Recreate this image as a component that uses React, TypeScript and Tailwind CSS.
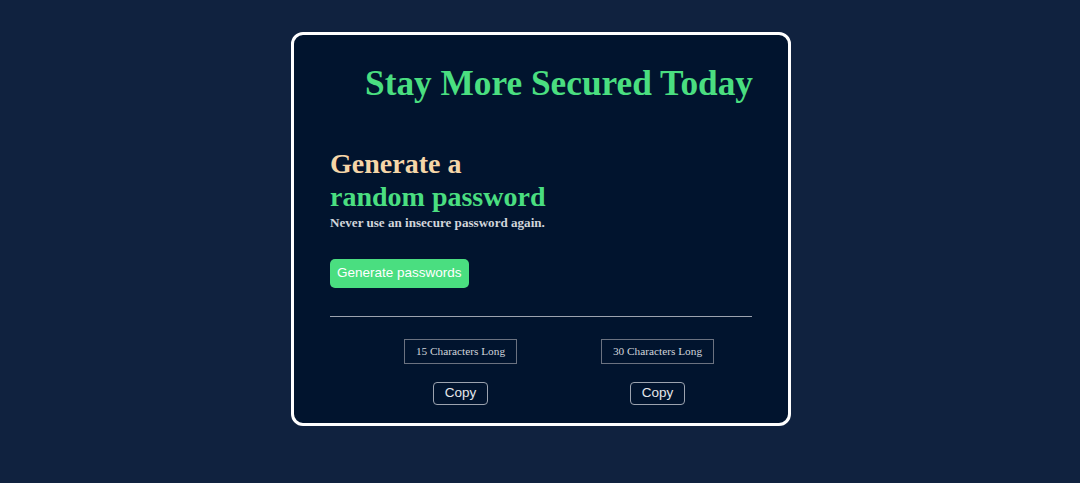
export default function App() {
  const serif = { fontFamily: '"Liberation Serif", "Times New Roman", serif' };
  const sans = { fontFamily: '"Liberation Sans", Arial, sans-serif' };
  return (
    <div className="min-h-[483px] w-full bg-[#10223f] flex justify-center pt-[32px]" style={serif}>
      <div className="ml-[2px] w-[500px] h-[394px] rounded-[12px] border-[3px] border-white bg-[#01142e] px-[36px] pt-[29px]">
        <h1 className="text-[35.3px] leading-[40px] font-bold text-[#4ade80] pl-[35px] whitespace-nowrap">
          Stay More Secured Today
        </h1>
        <div className="mt-[43px]">
          <h2 className="text-[28px] leading-[33px] font-bold text-[#f5d6a8]">Generate a</h2>
          <h2 className="text-[28px] leading-[33px] font-bold text-[#4ade80]">random password</h2>
          <p className="text-[13.1px] leading-[19px] font-bold text-[#d1d5db]">
            Never use an insecure password again.
          </p>
        </div>
        <button
          className="mt-[27px] h-[29px] px-[7px] rounded-[5px] bg-[#4ade80] text-white text-[13.5px]"
          style={sans}
        >
          Generate passwords
        </button>
        <div className="mt-[28px] h-px bg-[#9ca3af]" />
        <div className="flex pl-[32px] mt-[22px]">
          {["15 Characters Long", "30 Characters Long"].map((label) => (
            <div key={label} className="w-[197px] shrink-0 flex flex-col items-center">
              <div className="h-[25px] w-[113px] border border-[#6b7280] text-[11.3px] text-[#d1d5db] flex items-center justify-center">
                {label}
              </div>
              <button
                className="mt-[18px] h-[23px] w-[55px] rounded-[4px] border border-[#9ca3af] text-[13.5px] text-[#e5e7eb]"
                style={sans}
              >
                Copy
              </button>
            </div>
          ))}
        </div>
      </div>
    </div>
  );
}
